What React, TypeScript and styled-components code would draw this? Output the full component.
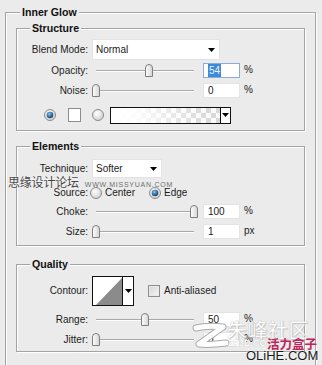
import React from "react";
import styled, { createGlobalStyle } from "styled-components";

const Global = createGlobalStyle`
  html, body { margin: 0; padding: 0; background: #ebebeb; overflow: hidden; }
  body { font-family: "Liberation Sans", Arial, sans-serif; }
`;

const BG = "#ebebeb";

const Page = styled.div`
  position: relative;
  width: 322px;
  height: 365px;
  overflow: hidden;
  box-sizing: border-box;
  padding: 12px 0 0 5px;
  background: ${BG};
  font-family: "Liberation Sans", Arial, sans-serif;
  font-size: 10px;
  color: #1c1c1c;
`;

const Group = styled.section<{ $mt?: number; $pb?: number; $px?: number; $w?: number }>`
  display: flex;
  flex-direction: column;
  box-sizing: border-box;
  ${(p) => (p.$w ? `width: ${p.$w}px;` : "")}
  margin-top: ${(p) => p.$mt ?? 0}px;
  padding: 0 ${(p) => p.$px ?? 0}px ${(p) => p.$pb ?? 0}px;
  border: 1px solid #a3a3a3;
  box-shadow: inset 1px 1px 0 #fff, 1px 1px 0 #fff;
`;

const Title = styled.h2<{ $ml: number }>`
  align-self: flex-start;
  margin: -7px 0 0 ${(p) => p.$ml}px;
  padding: 0 2px;
  background: ${BG};
  font: bold 10.6px/13px "Liberation Sans", Arial, sans-serif;
  color: #111;
`;

const Row = styled.div<{ $h: number; $mt: number; $pl?: number }>`
  display: flex;
  align-items: center;
  height: ${(p) => p.$h}px;
  margin-top: ${(p) => p.$mt}px;
  padding-left: ${(p) => p.$pl ?? 0}px;
`;

const Label = styled.span`
  flex: none;
  width: 71px;
  margin-right: 4px;
  text-align: right;
  white-space: nowrap;
  line-height: 12px;
`;

const SelectBox = styled.div<{ $w: number; $h: number }>`
  flex: none;
  box-sizing: border-box;
  width: ${(p) => p.$w}px;
  height: ${(p) => p.$h}px;
  display: flex;
  align-items: center;
  justify-content: space-between;
  padding: 0 4px 0 3px;
  background: #fff;
  border: 1px solid #e3e3e3;
  line-height: 12px;
`;

const Caret = styled.svg`
  flex: none;
  width: 7px;
  height: 4px;
`;

const SliderBox = styled.div`
  position: relative;
  flex: none;
  box-sizing: border-box;
  width: 106px;
  height: 15px;
  padding: 0 4px;
  display: flex;
  align-items: center;
`;

const Track = styled.div`
  flex: 1;
  height: 0;
  border-top: 1px solid #a9a9a9;
  border-bottom: 1px solid #fdfdfd;
`;

const Thumb = styled.svg`
  position: absolute;
  top: 1px;
  width: 8px;
  height: 13px;
`;

const NumField = styled.div<{ $focus?: boolean }>`
  flex: none;
  box-sizing: border-box;
  width: 37px;
  height: 15px;
  margin-left: 5px;
  padding-left: 4px;
  display: flex;
  align-items: center;
  background: #fff;
  border: 1px solid ${(p) => (p.$focus ? "#8aadd8" : "#e4e4e4")};
  line-height: 12px;
`;

const Selected = styled.span`
  background: #3e8ad9;
  color: #eaf3ff;
  line-height: 13px;
  padding: 0 1px;
`;

const Unit = styled.span`
  align-self: flex-start;
  margin-left: 4px;
  line-height: 12px;
  margin-top: 1px;
`;

const RadioIcon = styled.svg<{ $ml?: number }>`
  flex: none;
  width: 12px;
  height: 12px;
  margin-left: ${(p) => p.$ml ?? 0}px;
`;

const OptText = styled.span<{ $ml?: number }>`
  margin-left: ${(p) => p.$ml ?? 3}px;
  line-height: 12px;
  white-space: nowrap;
`;

const Swatch = styled.div`
  flex: none;
  box-sizing: border-box;
  width: 13px;
  height: 14px;
  margin-left: 12px;
  background: #fff;
  border: 1px solid #8d8d8d;
`;

const GradientPicker = styled.div`
  flex: none;
  box-sizing: border-box;
  display: flex;
  width: 121px;
  height: 17px;
  margin-left: 6px;
  border: 1px solid #111;
  background: #fff;
`;

const GradientPreview = styled.div`
  flex: 1;
  background: linear-gradient(
      to right,
      #fff 0%,
      rgba(255, 255, 255, 0.92) 22%,
      rgba(255, 255, 255, 0) 88%
    ),
    repeating-conic-gradient(#d9d9d9 0 25%, #fbfbfb 0 50%) 0 0 / 10px 10px;
`;

const PickerArrow = styled.div<{ $w: number }>`
  flex: none;
  box-sizing: border-box;
  width: ${(p) => p.$w}px;
  display: flex;
  align-items: center;
  justify-content: center;
  border-left: 1px solid #111;
  background: #fff;
`;

const ContourPicker = styled.div`
  flex: none;
  box-sizing: border-box;
  display: flex;
  width: 42px;
  height: 30px;
  border: 1px solid #111;
  background: #fff;
`;

const ContourPreview = styled.svg`
  flex: none;
  width: 29px;
  height: 28px;
`;

const CheckBox = styled.div`
  flex: none;
  box-sizing: border-box;
  width: 12px;
  height: 12px;
  margin-left: 14px;
  border: 1px solid #8e8e8e;
  background: linear-gradient(135deg, #d6d6d6, #f6f6f6);
  box-shadow: inset 0 0 0 1px #e9e9e9;
`;

/* ---------- watermarks (overlays) ---------- */

const SiteMark = styled.div`
  position: absolute;
  left: 8px;
  top: 175px;
  display: flex;
  align-items: baseline;
  pointer-events: none;
`;

const SiteMarkCn = styled.span`
  font-family: "Noto Sans CJK SC", sans-serif;
  font-size: 12px;
  line-height: 13px;
  color: #444;
  letter-spacing: -0.2px;
  text-shadow: 0 0 1px #fff, 0 0 2px #fff;
`;

const SiteMarkUrl = styled.span`
  margin-left: 6px;
  font-family: "Liberation Sans", Arial, sans-serif;
  font-size: 7px;
  letter-spacing: 0.75px;
  color: #6f6f6f;
`;

const Brand = styled.div`
  position: absolute;
  left: 0;
  top: 0;
  width: 322px;
  height: 365px;
  pointer-events: none;
`;

const BrandPiece = styled.div<{ $x: number; $y: number }>`
  position: absolute;
  left: ${(p) => p.$x}px;
  top: ${(p) => p.$y}px;
  white-space: nowrap;
`;

const BrandZ = styled.svg`
  display: block;
  width: 40px;
  height: 28px;
  opacity: 0.92;
`;

const BrandCn = styled.span`
  font-family: "Noto Sans CJK SC", sans-serif;
  font-size: 20px;
  line-height: 22px;
  color: #fff;
  letter-spacing: 0.5px;
  text-shadow: 0 0 1px #9a9a9a, 1px 1px 1px #c0c0c0;
  opacity: 0.85;
`;

const BrandSmall = styled.span`
  font-family: "Liberation Sans", Arial, sans-serif;
  font-weight: bold;
  font-size: 9px;
  color: #fff;
  text-shadow: 0 0 1px #999;
  opacity: 0.9;
`;

const BrandRed = styled.span`
  font-family: "Noto Sans CJK SC", sans-serif;
  font-weight: 700;
  font-size: 12.5px;
  line-height: 13px;
  color: #bd2459;
`;

const BrandUrl = styled.span`
  font-family: "Liberation Sans", Arial, sans-serif;
  font-size: 13px;
  line-height: 14px;
  color: #1b1b1b;
  text-shadow: 0 0 2px #fff;
`;

/* ---------- small drawings ---------- */

const DownCaret = () => (
  <Caret viewBox="0 0 7 4">
    <polygon points="0,0 7,0 3.5,4" fill="#000" />
  </Caret>
);

const Radio = ({ checked, ml }: { checked?: boolean; ml?: number }) => (
  <RadioIcon viewBox="0 0 12 12" $ml={ml}>
    <defs>
      <radialGradient id="rOff" cx="0.4" cy="0.35" r="0.7">
        <stop offset="0" stopColor="#ffffff" />
        <stop offset="1" stopColor="#cfcfcf" />
      </radialGradient>
      <radialGradient id="rOn" cx="0.4" cy="0.35" r="0.7">
        <stop offset="0" stopColor="#8fc3ea" />
        <stop offset="0.6" stopColor="#2f6da0" />
        <stop offset="1" stopColor="#163f63" />
      </radialGradient>
    </defs>
    <circle cx="6" cy="6" r="5.5" fill="url(#rOff)" stroke="#8a8a8a" />
    {checked && <circle cx="6" cy="6" r="3.3" fill="url(#rOn)" />}
  </RadioIcon>
);

const Slider = ({ value }: { value: number }) => (
  <SliderBox>
    <Track />
    <Thumb viewBox="0 0 8 13" style={{ left: `${value * 0.98}px` }}>
      <defs>
        <linearGradient id="thumbG" x1="0" y1="0" x2="1" y2="0">
          <stop offset="0" stopColor="#ffffff" />
          <stop offset="1" stopColor="#d4d4d4" />
        </linearGradient>
      </defs>
      <path
        d="M0.5 12.5 V4 Q0.5 0.5 4 0.5 Q7.5 0.5 7.5 4 V12.5 Z"
        fill="url(#thumbG)"
        stroke="#7f7f7f"
      />
    </Thumb>
  </SliderBox>
);

type SliderRowProps = {
  label: string;
  value: number;
  text: string;
  unit: string;
  mt: number;
  focus?: boolean;
};

const SliderRow = ({ label, value, text, unit, mt, focus }: SliderRowProps) => (
  <Row $h={15} $mt={mt}>
    <Label>{label}</Label>
    <Slider value={value} />
    <NumField $focus={focus}>{focus ? <Selected>{text}</Selected> : text}</NumField>
    <Unit>{unit}</Unit>
  </Row>
);

export default function App() {
  return (
    <Page>
      <Global />
      <Group $w={311} $px={10} $pb={20}>
        <Title $ml={4}>Inner Glow</Title>

        <Group $mt={9} $pb={7}>
          <Title $ml={13}>Structure</Title>
          <Row $h={21} $mt={4}>
            <Label>Blend Mode:</Label>
            <SelectBox $w={128} $h={21}>
              <span>Normal</span>
              <DownCaret />
            </SelectBox>
          </Row>
          <SliderRow label="Opacity:" value={54} text="54" unit="%" mt={3} focus />
          <SliderRow label="Noise:" value={0} text="0" unit="%" mt={5} />
          <Row $h={16} $mt={9} $pl={27}>
            <Radio checked />
            <Swatch />
            <Radio ml={11} />
            <GradientPicker>
              <GradientPreview />
              <PickerArrow $w={10}>
                <DownCaret />
              </PickerArrow>
            </GradientPicker>
          </Row>
        </Group>

        <Group $mt={15} $pb={6}>
          <Title $ml={13}>Elements</Title>
          <Row $h={19} $mt={6}>
            <Label>Technique:</Label>
            <SelectBox $w={70} $h={19}>
              <span>Softer</span>
              <DownCaret />
            </SelectBox>
          </Row>
          <Row $h={14} $mt={8}>
            <Label>Source:</Label>
            <Radio ml={-2} />
            <OptText>Center</OptText>
            <Radio checked ml={14} />
            <OptText>Edge</OptText>
          </Row>
          <SliderRow label="Choke:" value={100} text="100" unit="%" mt={4} />
          <SliderRow label="Size:" value={0} text="1" unit="px" mt={5} />
        </Group>

        <Group $mt={18} $pb={4}>
          <Title $ml={13}>Quality</Title>
          <Row $h={30} $mt={5}>
            <Label>Contour:</Label>
            <ContourPicker>
              <ContourPreview viewBox="0 0 29 28">
                <rect x="0" y="0" width="29" height="28" fill="#fff" />
                <polygon points="3,28 29,1 29,28" fill="#8b8b8b" />
              </ContourPreview>
              <PickerArrow $w={11}>
                <DownCaret />
              </PickerArrow>
            </ContourPicker>
            <CheckBox />
            <OptText $ml={4}>Anti-aliased</OptText>
          </Row>
          <SliderRow label="Range:" value={50} text="50" unit="%" mt={6} />
          <SliderRow label="Jitter:" value={0} text="0" unit="%" mt={5} />
        </Group>
      </Group>

      <SiteMark>
        <SiteMarkCn>思缘设计论坛</SiteMarkCn>
        <SiteMarkUrl>WWW.MISSYUAN.COM</SiteMarkUrl>
      </SiteMark>

      <Brand>
        <BrandPiece $x={190} $y={322}>
          <BrandZ viewBox="0 0 40 28">
            <path
              d="M6 6 C14 4 24 4 33 5 L9 22 C18 23 28 22 36 21"
              fill="none"
              stroke="#a5a5a5"
              strokeWidth="7"
              strokeLinecap="round"
              strokeLinejoin="round"
            />
            <path
              d="M6 6 C14 4 24 4 33 5 L9 22 C18 23 28 22 36 21"
              fill="none"
              stroke="#ffffff"
              strokeWidth="5"
              strokeLinecap="round"
              strokeLinejoin="round"
            />
          </BrandZ>
        </BrandPiece>
        <BrandPiece $x={227} $y={319}>
          <BrandCn>朱峰社区</BrandCn>
        </BrandPiece>
        <BrandPiece $x={228} $y={337}>
          <BrandSmall>ZF3D.COM</BrandSmall>
        </BrandPiece>
        <BrandPiece $x={267} $y={337}>
          <BrandRed>活力盒子</BrandRed>
        </BrandPiece>
        <BrandPiece $x={246} $y={349}>
          <BrandUrl>OLiHE.COM</BrandUrl>
        </BrandPiece>
      </Brand>
    </Page>
  );
}
